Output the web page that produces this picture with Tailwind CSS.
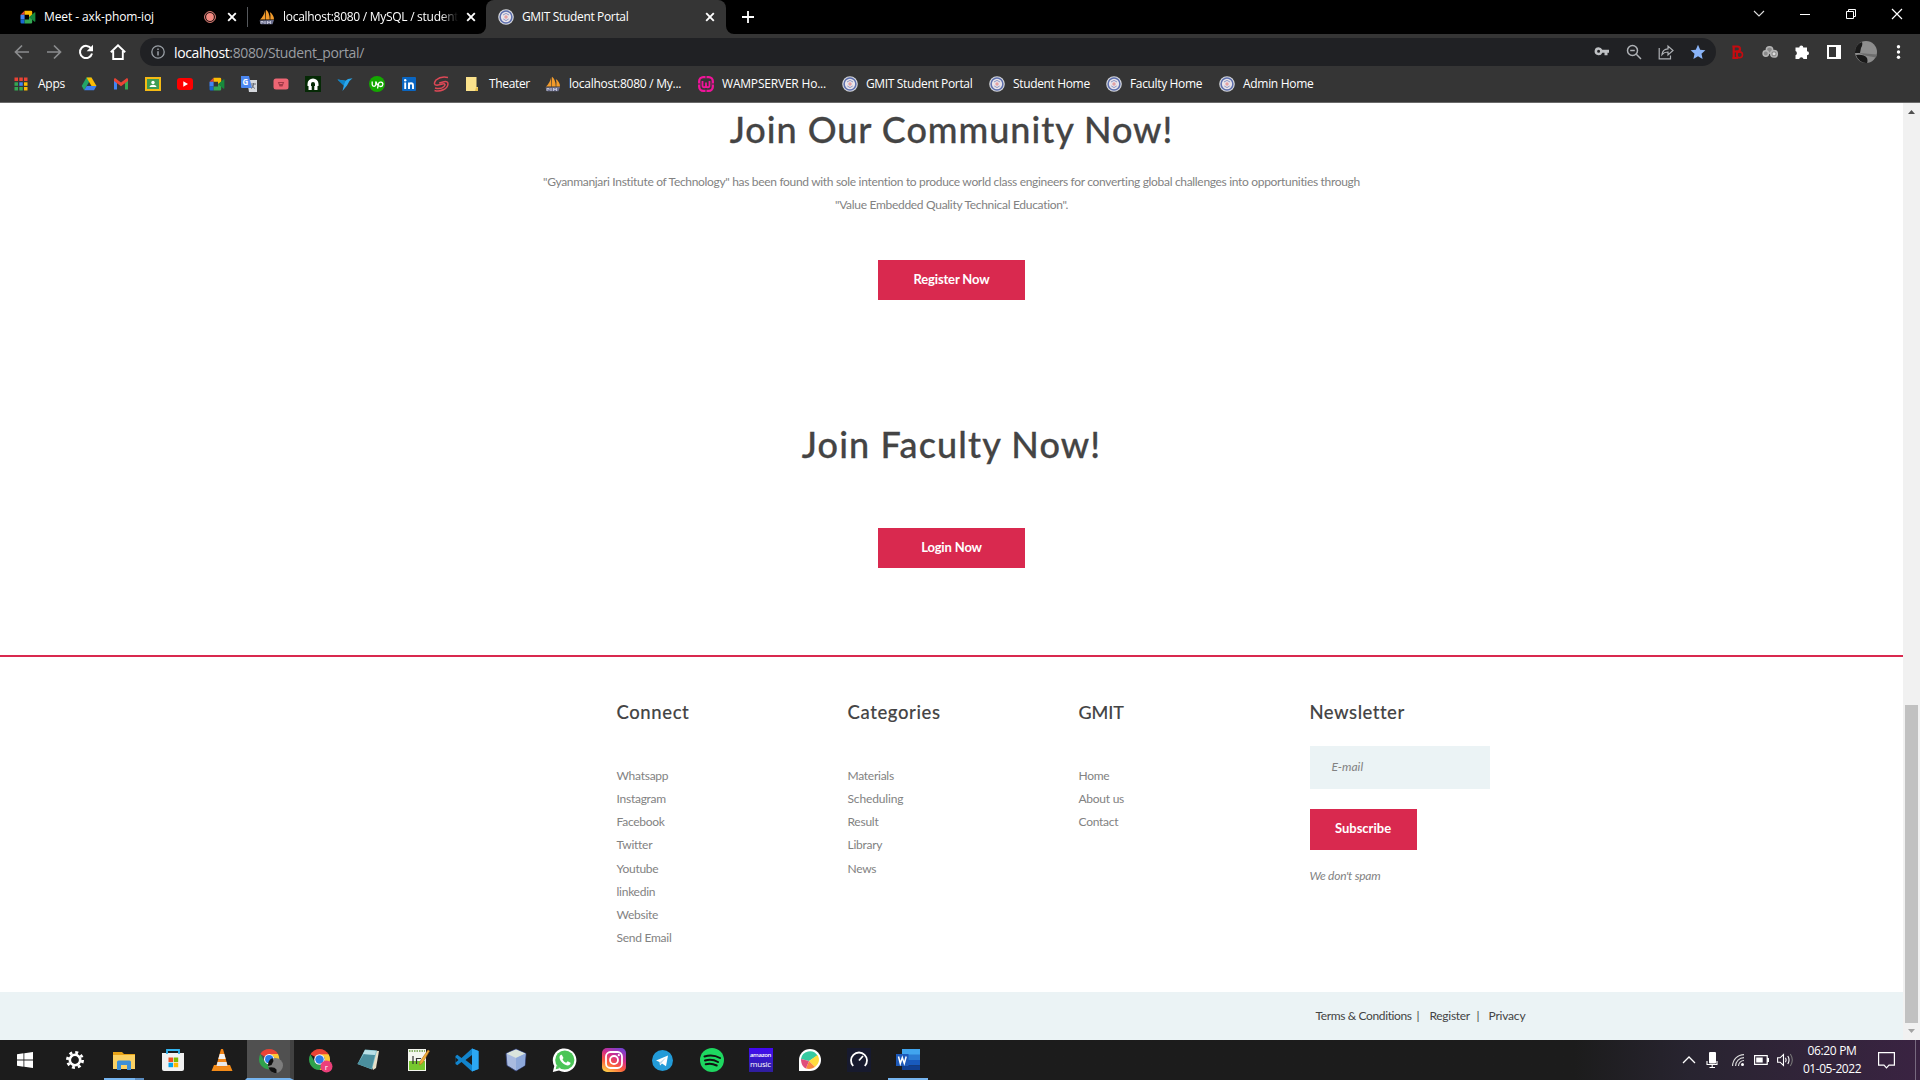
<!DOCTYPE html>
<html lang="en">
<head>
<meta charset="utf-8">
<title>GMIT Student Portal</title>
<script src="https://cdn.jsdelivr.net/npm/@tailwindcss/browser@4"></script>
</head>
<body class="w-[1920px] h-[1080px] overflow-hidden flex flex-col bg-white font-['Open_Sans',sans-serif]">

<svg class="hidden">
  <defs>
    <symbol id="crest" viewBox="0 0 16 16"><circle cx="8" cy="8" r="7.8" fill="#d5d7dc"/><circle cx="8" cy="8" r="5.900" fill="#e9e4ea" stroke="#5d6fae" stroke-width="1.500"/><path d="M5 6l3-1.600L11 6M5.300 10L8 11.600 10.700 10" stroke="#8d97c4" fill="none"/><circle cx="8" cy="8" r="1.700" fill="#e2a1a4"/></symbol>
    <symbol id="meet" viewBox="0 0 16 16"><path d="M.5 5.800L4.600 1.800v4z" fill="#ea4335"/><path d="M4.600 1.800H11a1.200 1.200 0 011.200 1.200v3.200L9 8.800v-3H4.600z" fill="#fbbc04"/><path d="M.5 5.800h4.100v4.700H.5z" fill="#4285f4"/><path d="M.5 10.500h4.100v3.900H1.700a1.200 1.200 0 01-1.200-1.200z" fill="#1967d2"/><path d="M4.600 10.500H9V7.800l3.200 2.500v2.900a1.200 1.200 0 01-1.200 1.200H4.600z" fill="#34a853"/><path d="M9 8l5.500-4.600c.4-.3.900 0 .9.400v8.500c0 .4-.5.700-.9.400z" fill="#17893c"/></symbol>
    <symbol id="pma" viewBox="0 0 16 16"><path d="M1 10.500Q5 7 6.200 1L6.500 10.500zM7 10.500V.8Q10.500 3 10.800 10.500zM11.300 10.500Q12 6 10.800 3 15 6 15 10.500z" fill="#f29b2c"/><path d="M.5 11.500l14.500-.6-1.500 4.400H2z" fill="#6c7090"/><path d="M2 15v-2.500h2V14M6 15v-3m2.500 3v-3l1.500 2 1.500-2v3" stroke="#c9cbdc" fill="none" stroke-width=".9"/></symbol>
    <symbol id="x" viewBox="0 0 10 10"><path d="M1.200 1.200l7.600 7.600M8.800 1.200L1.200 8.800" stroke="#fff" stroke-width="1.900"/></symbol>
    <symbol id="chrome" viewBox="0 0 24 24"><path d="M12 12L2.500 6.500A11 11 0 0121.500 6.500z" fill="#ea4335"/><path d="M2.500 6.500A11 11 0 0012 23l4.800-8.200A5.500 5.500 0 017.200 14.800z" fill="#2fa24c"/><path d="M21.500 6.500A11 11 0 0112 23l4.800-8.200A5.500 5.500 0 0012 6.500z" fill="#fcc934"/><circle cx="12" cy="12" r="5.500" fill="#fff"/><circle cx="12" cy="12" r="4.400" fill="#2b7de9"/></symbol>
  </defs>
</svg>

<!-- Tab strip -->
<div class="h-[34px] shrink-0 bg-black flex text-[12px] text-white whitespace-nowrap">
  <div class="w-[247px] flex items-center pl-5">
    <svg class="size-4"><use href="#meet"/></svg>
    <span class="ml-2 w-[160px] tracking-[-0.1px]">Meet - axk-phom-ioj</span>
    <svg class="size-3" viewBox="0 0 12 12"><circle cx="6" cy="6" r="5.400" fill="none" stroke="#f28b82"/><circle cx="6" cy="6" r="3.900" fill="#f28b82"/></svg>
    <svg class="size-[10px] ml-[11px]"><use href="#x"/></svg>
  </div>
  <div class="w-[239px] flex items-center relative">
    <i class="w-px h-5 bg-[#55585c]"></i>
    <svg class="size-4 ml-[11px]"><use href="#pma"/></svg>
    <span class="ml-2 w-[175px] mask-r-from-90% tracking-[-0.28px]">localhost:8080 / MySQL / student</span>
    <svg class="size-[10px] ml-[8px]"><use href="#x"/></svg>
    <svg class="absolute right-0 bottom-0 size-2" viewBox="0 0 8 8"><path d="M8 0v8H0a8 8 0 008-8z" fill="#353535"/></svg>
  </div>
  <div class="w-[240px] flex items-center bg-[#353535] rounded-t-lg pl-3">
    <svg class="size-4"><use href="#crest"/></svg>
    <span class="ml-2 w-[183px] tracking-[-0.35px]">GMIT Student Portal</span>
    <svg class="size-[10px]"><use href="#x"/></svg>
  </div>
  <svg class="size-2 self-end" viewBox="0 0 8 8"><path d="M0 0v8h8a8 8 0 01-8-8z" fill="#353535"/></svg>
  <svg class="size-3 ml-2 self-center" viewBox="0 0 12 12"><path d="M6 0v12M0 6h12" stroke="#fff" stroke-width="1.800"/></svg>
  <div class="ml-auto flex h-[28px] items-center text-white">
    <svg class="w-[46px] h-3" viewBox="-23 -6 46 12"><path d="M-5-3L0 2 5-3" stroke="#ddd" fill="none" stroke-width="1.100"/></svg>
    <svg class="w-[46px] h-3" viewBox="-23 -6 46 12"><path d="M-5 .5H5" stroke="#fff"/></svg>
    <svg class="w-[46px] h-3" viewBox="-23 -6 46 12"><path d="M-4.500-2.500h7v7h-7zM-2.500-2.500v-2h7v7h-2" stroke="#fff" fill="none"/></svg>
    <svg class="w-[46px] h-3" viewBox="-23 -6 46 12"><path d="M-5-5L5 5M5-5L-5 5" stroke="#fff" stroke-width="1.200"/></svg>
  </div>
</div>

<!-- Toolbar -->
<div class="h-[36px] shrink-0 bg-[#353535] flex items-center pl-[14px] pb-1 pt-1">
  <svg class="size-4" viewBox="0 0 16 16"><path d="M15 8H2M8 1.500L1.500 8 8 14.500" stroke="#8b8c8e" fill="none" stroke-width="1.700"/></svg>
  <svg class="size-4 ml-4" viewBox="0 0 16 16"><path d="M1 8h13M8 1.500L14.500 8 8 14.500" stroke="#8b8c8e" fill="none" stroke-width="1.700"/></svg>
  <svg class="size-4 ml-4" viewBox="0 0 16 16"><path d="M13.300 4.800A6.100 6.100 0 1014 9.500" stroke="#fff" fill="none" stroke-width="2"/><path d="M15 .8v6.400H8.700z" fill="#fff"/></svg>
  <svg class="size-4 ml-4" viewBox="0 0 16 16"><path d="M.8 8.200L8 1.300l7.200 6.900M3.200 7v8h9.600V7" stroke="#fff" fill="none" stroke-width="1.900"/></svg>
  <div class="ml-[14px] w-[1576px] h-7 rounded-full bg-[#202124] flex items-center pl-[11px] text-[14px] text-[#9a9da1]">
    <svg class="size-[14px]" viewBox="0 0 14 14"><circle cx="7" cy="7" r="6.200" fill="none" stroke="#9aa0a6" stroke-width="1.300"/><path d="M7 6.200v4.300M7 3.400v1.500" stroke="#9aa0a6" stroke-width="1.500"/></svg>
    <span class="ml-[9px] tracking-[-0.37px]"><b class="font-normal text-white">localhost</b>:8080/Student_portal/</span>
    <div class="ml-auto mr-[10px] flex gap-4 items-center">
      <svg class="size-4" viewBox="0 0 16 16"><path fill-rule="evenodd" d="M4.600 3.200a4 4 0 013.700 2.500H15v3h-1.500v2.600h-3V8.700H8.300A4 4 0 114.600 3.200zm0 2.500a1.500 1.500 0 100 3 1.500 1.500 0 000-3z" fill="#bfc1c4"/></svg>
      <svg class="size-4" viewBox="0 0 16 16"><circle cx="6.500" cy="6.500" r="5" fill="none" stroke="#aeb1b5" stroke-width="1.500"/><path d="M10.300 10.300L15 15M4.200 6.500h4.600" stroke="#aeb1b5" stroke-width="1.500"/></svg>
      <svg class="size-4" viewBox="0 0 16 16"><path d="M1.200 4v10.800h11.300V11.500M4 10.500c.5-4 3-5.500 6-5.600V2l5 4.500-5 4.500V8c-2.500 0-4.500.7-6 2.500z" fill="none" stroke="#aeb1b5" stroke-width="1.200"/></svg>
      <svg class="size-4" viewBox="0 0 16 16"><path d="M8 .8l2.200 4.900 5.200.5-3.900 3.500 1.100 5.200L8 12.200l-4.600 2.700 1.100-5.200L.6 6.200l5.200-.5z" fill="#8ab4f8"/></svg>
    </div>
  </div>
  <svg class="size-4 ml-[14px]" viewBox="0 0 16 16"><path d="M3.700 14V2.500h3.800a2.300 2.300 0 010 5H4M2.300 2.500h3M2.300 14h6" fill="none" stroke="#c40b10" stroke-width="2.200"/><circle cx="9.600" cy="10.800" r="2.900" fill="none" stroke="#c40b10" stroke-width="1.600"/><path d="M7 6.500v6" stroke="#c40b10" stroke-width="1.600"/></svg>
  <svg class="size-4 ml-4" viewBox="0 0 16 16"><g fill="#8a8a8a" stroke="#b5b5b5" stroke-width="1.500"><circle cx="7.500" cy="6" r="3.200"/><circle cx="3.800" cy="9.500" r="2.700"/><circle cx="12" cy="9.800" r="3.300"/></g><circle cx="12" cy="9.800" r="1.500" fill="#ddd"/></svg>
  <svg class="size-4 ml-4" viewBox="0 0 16 16"><path d="M1.500 3.500h3.800a2 2 0 114 0H13v3.700a2 2 0 110 4V15H9.500a2.200 2.200 0 00-4.300 0H1.500v-3.800a2.200 2.200 0 000-4.100z" fill="#fff"/></svg>
  <svg class="size-4 ml-4" viewBox="0 0 16 16"><path fill-rule="evenodd" d="M1 1h14v14H1zm2 2v10h7V3z" fill="#fff"/></svg>
  <svg class="size-[22px] ml-[13px]" viewBox="0 0 22 22"><circle cx="11" cy="11" r="11" fill="#8d8d8d"/><path d="M0 11A11 11 0 017 1q1 3-1 6l-1 5H0zM1 14q8-1 11 3 1 3 0 5A11 11 0 011 14z" fill="#191919"/><path d="M4 12l18 1.500-1 3-11-2z" fill="#6e6e6e"/></svg>
  <svg class="size-4 ml-[14px]" viewBox="0 0 16 16"><g fill="#fff"><circle cx="7.500" cy="2.800" r="1.700"/><circle cx="7.500" cy="8" r="1.700"/><circle cx="7.500" cy="13.200" r="1.700"/></g></svg>
</div>

<!-- Bookmarks bar -->
<div class="h-[33px] shrink-0 bg-[#353535] border-b border-[#6a6a6a] flex items-center pl-[14px] pb-[4px] text-[12px] tracking-[-0.25px] text-white whitespace-nowrap">
  <svg class="size-[14px]" viewBox="0 0 14 14"><path d="M.5.500h3.500v3.500H.5zM5.300.500h3.500v3.500H5.300zM10 .5h3.500v3.500H10z" fill="#ea4335"/><path d="M.5 5.300h3.500v3.500H.5z" fill="#34a853"/><path d="M5.300 5.300h3.500v3.500H5.300z" fill="#4285f4"/><path d="M10 5.300h3.500v3.500H10z" fill="#fbbc04"/><path d="M.5 10h3.500v3.500H.5zM5.300 10h3.500v3.500H5.300z" fill="#34a853"/><path d="M10 10h3.500v3.500H10z" fill="#fbbc04"/></svg>
  <span class="ml-[10px] w-[43px]">Apps</span>
  <div class="flex gap-4 w-[384px]">
    <svg class="size-4" viewBox="0 0 16 16"><path d="M5.500 1.500h5L8 6 3.200 14.300.7 10z" fill="#23a566"/><path d="M5.500 1.500h5l5 8.500h-5z" fill="#fbbc04"/><path d="M5.700 10h9.800L13 14.300H3.200z" fill="#3d7ff0"/></svg>
    <svg class="size-4" viewBox="0 0 16 16"><path d="M1 3.500v10h3V7z" fill="#4285f4"/><path d="M12 7v6.500h3v-10z" fill="#34a853"/><path d="M1 5V3.500C1 2.500 2 2 3 2.700L8 6.500l5-3.800c1-.7 2-.2 2 .8V5l-7 5.300z" fill="#ea4335"/></svg>
    <svg class="size-4" viewBox="0 0 16 16"><path d="M0 1h16v14H0z" fill="#f5ba14"/><path d="M2 3h12v10H2z" fill="#3f9c54"/><circle cx="8" cy="6.500" r="1.700" fill="#fff"/><path d="M4.500 11c.5-3 6.500-3 7 0z" fill="#fff"/></svg>
    <svg class="size-4" viewBox="0 0 16 16"><rect y="2" width="16" height="12" rx="3" fill="#f00"/><path d="M6.300 5.300L11 8l-4.700 2.700z" fill="#fff"/></svg>
    <svg class="size-4"><use href="#meet"/></svg>
    <svg class="size-4" viewBox="0 0 16 16"><path d="M6 4h10v12H8z" fill="#d4d7dc"/><path d="M0 0h8l3 12H1a1 1 0 01-1-1z" fill="#4c87f0"/><text x="1.500" y="8.500" font-size="8" font-weight="700" fill="#fff">G</text><path d="M10 8h5M12.500 7v1c0 3-1.500 4-2.500 4.500M11 9c.5 2 2 3 3 3.500" stroke="#666b75" fill="none"/></svg>
    <svg class="size-4" viewBox="0 0 16 16"><rect x=".5" y="2.500" width="15" height="11" rx="2.500" fill="#ee6674"/><path d="M4.800 6h6.400l-1.700 4.500h-3z" fill="#a33a48"/><path d="M6.500 7.500h3" stroke="#ee6674"/></svg>
    <svg class="size-4" viewBox="0 0 16 16"><path d="M0 0h16v16H0z" fill="#052905"/><path d="M2.500 8a5.500 5.500 0 0111 0v2h-1v4H9.300v-4H10V8a2 2 0 00-4 0v2h.7v4H3.500v-4h-1z" fill="#fff"/></svg>
    <svg class="size-4" viewBox="0 0 16 16"><path d="M.5 3.500l8 1.200L11 3l4.500-.7-3 2.700L10 9.500 5.500 15 6.800 9.500z" fill="#29a7ed"/><path d="M.5 3.500l8 1.200L6.800 9.500z" fill="#0d84c9"/></svg>
    <svg class="size-4" viewBox="0 0 16 16"><circle cx="8" cy="8" r="8" fill="#14a800"/><path d="M3.200 5.500v3a1.800 1.800 0 003.600 0v-3c1 2.500 1.700 3.500 2.400 4M8.500 12.500L9.500 8a2.200 2.200 0 112 2.500c-1.500 0-2.500-1-3.500-2.500" fill="none" stroke="#fff" stroke-width="1.300"/></svg>
    <svg class="size-4" viewBox="0 0 16 16"><rect x="1" y="1" width="14" height="14" rx="1" fill="#0a66c2"/><path d="M4.200 6.500V13M8 13V6.500M8 9.500c0-3 4-3 4 0V13" stroke="#fff" stroke-width="1.900" fill="none"/><circle cx="4.200" cy="4.200" r="1.200" fill="#fff"/></svg>
    <svg class="size-4" viewBox="0 0 16 16"><path d="M15 1.500Q8-.2 3 4-.5 9 4 9.200L9.500 8c3-.6 3 1 1.500 2.500-2 2-5.500 2.500-9 1.500M1.500 14.500c6 1.800 13-1.500 13.500-6.500 0-2-1.500-2.800-4-2.200L6.200 7" fill="none" stroke="#dd4856" stroke-width="1.500"/></svg>
  </div>
  <svg class="size-4 ml-[-1px]" viewBox="0 0 16 16"><path d="M2 1h10.500v10H14v4H2z" fill="#fbe28c"/><path d="M12 11.500h2V15h-3z" fill="#e9c04c"/></svg>
  <span class="ml-[9px] w-[56px] tracking-[-0.35px]">Theater</span>
  <svg class="size-4"><use href="#pma"/></svg>
  <span class="ml-2 w-[129px]">localhost:8080 / My...</span>
  <svg class="size-4" viewBox="0 0 16 16"><rect x="1.200" y="1.200" width="13.600" height="13.600" rx="4" fill="none" stroke="#f0149a" stroke-width="2.300"/><path d="M4.500 5v4.500a1.700 1.700 0 003.500 0V6.500v3a1.700 1.700 0 003.500 0V5" fill="none" stroke="#f0149a" stroke-width="1.800"/><path d="M8 0v2.500M8 13v3M0 8h2M14 8h2" stroke="#353535"/></svg>
  <span class="ml-2 w-[120px] tracking-[-0.2px]">WAMPSERVER Ho...</span>
  <svg class="size-4"><use href="#crest"/></svg>
  <span class="ml-2 w-[123px] tracking-[-0.35px]">GMIT Student Portal</span>
  <svg class="size-4"><use href="#crest"/></svg>
  <span class="ml-2 w-[93px] tracking-[-0.35px]">Student Home</span>
  <svg class="size-4"><use href="#crest"/></svg>
  <span class="ml-2 w-[89px] tracking-[-0.35px]">Faculty Home</span>
  <svg class="size-4"><use href="#crest"/></svg>
  <span class="ml-2 tracking-[-0.3px]">Admin Home</span>
</div>

<!-- Page and scrollbar -->
<div class="h-[937px] shrink-0 flex">
  <main class="w-[1903px] flex flex-col font-[Lato,sans-serif] text-[12px] text-[#828282] whitespace-nowrap">
    <section class="h-[552px] flex flex-col items-center text-center">
      <h1 class="mt-[5px] h-[44px] leading-[43px] text-[36px] font-medium text-[#444] tracking-[0.96px] [-webkit-text-stroke:0.3px_#444]">Join Our Community Now!</h1>
      <p class="mt-[18px] leading-[23px]"><span class="tracking-[-0.32px]">"Gyanmanjari Institute of Technology" has been found with sole intention to produce world class engineers for converting global challenges into opportunities through</span><br><span class="tracking-[-0.3px]">"Value Embedded Quality Technical Education".</span></p>
      <a class="mt-[44px] w-[147px] h-10 leading-[39px] bg-[#d9294f] text-white font-bold text-[13px] tracking-[-0.15px]">Register Now</a>
      <h1 class="mt-[122px] h-[44px] leading-[44px] text-[36px] font-medium text-[#444] tracking-[1.13px] [-webkit-text-stroke:0.3px_#444]">Join Faculty Now!</h1>
      <a class="mt-[62px] w-[147px] h-10 leading-[39px] bg-[#d9294f] text-white font-bold text-[13px] tracking-[-0.15px]">Login Now</a>
    </section>
    <footer class="border-t-2 border-[#d9294f] flex flex-col h-[385px]">
      <div class="h-[335px] pl-[616.500px] pt-[42px] flex leading-[23.15px] tracking-[-0.26px]">
        <div class="w-[231px]"><h2 class="text-[18.5px] tracking-[0.6px] leading-[26px] mb-[39px] font-medium text-[#444] [-webkit-text-stroke:0.1px_#444]">Connect</h2><p>Whatsapp</p><p>Instagram</p><p>Facebook</p><p>Twitter</p><p>Youtube</p><p>linkedin</p><p>Website</p><p>Send Email</p></div>
        <div class="w-[231px]"><h2 class="text-[18.5px] tracking-[0.6px] leading-[26px] mb-[39px] font-medium text-[#444] [-webkit-text-stroke:0.1px_#444]">Categories</h2><p>Materials</p><p class="tracking-[-0.15px]">Scheduling</p><p>Result</p><p>Library</p><p>News</p></div>
        <div class="w-[231px]"><h2 class="text-[18px] tracking-[-0.1px] leading-[26px] mb-[39px] font-medium text-[#444] [-webkit-text-stroke:0.1px_#444]">GMIT</h2><p>Home</p><p>About us</p><p>Contact</p></div>
        <div class="w-[180px]"><h2 class="text-[18.5px] tracking-[0.5px] leading-[26px] font-medium text-[#444] [-webkit-text-stroke:0.1px_#444]">Newsletter</h2>
          <div class="mt-[21px] h-[43px] leading-[42px] pl-[22px] bg-[#ebf3f5] italic tracking-normal">E-mail</div>
          <div class="mt-5 w-[107px] h-[41px] leading-[39px] text-center bg-[#d9294f] text-white font-bold text-[13px] tracking-normal">Subscribe</div>
          <p class="mt-[14px] italic">We don't spam</p>
        </div>
      </div>
      <div class="h-[48px] bg-[#ebf3f5] flex items-center pl-[1315.500px] text-[#444]"><span class="w-[101px] tracking-[-0.38px]">Terms &amp; Conditions</span><span class="w-[13px]">|</span><span class="w-[47px] tracking-[-0.3px]">Register</span><span class="w-[12px]">|</span><span class="tracking-[-0.2px]">Privacy</span></div>
    </footer>
  </main>
  <div class="w-[17px] bg-[#f1f1f1] flex flex-col items-center">
    <svg class="w-[17px] h-[17px]" viewBox="0 0 17 17"><path d="M5 11h7L8.500 7z" fill="#505050"/></svg>
    <div class="mt-[585px] w-[13px] h-[318px] bg-[#c1c1c1]"></div>
    <svg class="w-[17px] h-[17px]" viewBox="0 0 17 17"><path d="M5 6h7L8.500 10z" fill="#a3a3a3"/></svg>
  </div>
</div>

<!-- Taskbar -->
<div class="h-10 shrink-0 flex items-stretch bg-linear-to-r from-[#1c1c1c] from-82% via-[#282430] via-88% to-[#3a2342]">
  <div class="flex [&>div]:w-[49px] [&>div]:flex [&>div]:items-center [&>div]:justify-center">
    <div><svg class="size-4" viewBox="0 0 16 16"><path d="M0 2.300L6.500 1.300v6.200H0zM7.300 1.200L16 0v7.500H7.300zM0 8.400h6.500v6.300L0 13.700zM7.300 8.400H16V16l-8.700-1.200z" fill="#fff"/></svg></div>
    <div class="pl-[3px]"><svg class="size-[20px]" viewBox="-10 -10 20 20"><circle r="5.200" fill="none" stroke="#fff" stroke-width="2.600"/><circle r="7.600" fill="none" stroke="#fff" stroke-width="2.800" stroke-dasharray="2.980 2.990"/></svg></div>
    <div class="pl-[2px] pt-[2px] relative"><svg class="w-[22px] h-[20px]" viewBox="0 0 22 20"><path d="M0 1h9l2 2h11v15H0z" fill="#e8a317"/><path d="M0 4h22v14H0z" fill="#fbd163"/><path d="M4 19v-8a1.500 1.500 0 011.500-1.500h11A1.500 1.500 0 0118 11v8h-4v-5H8v5z" fill="#3b8fd8"/></svg><i class="absolute bottom-0 left-[6px] w-10 h-[2px] bg-[#76b5f0] border-r-[9px] border-[#5a8cc0]"></i></div>
    <div class="pl-[2px]"><svg class="w-[24px] h-[24px]" viewBox="0 0 24 24"><path d="M1 5h22v16a2 2 0 01-2 2H3a2 2 0 01-2-2z" fill="#f1f1f1"/><path d="M6 6V2h12v4" fill="none" stroke="#33b5f0" stroke-width="1.800"/><path d="M7.500 9.500H12V14H7.500z" fill="#f25022"/><path d="M12.700 9.500h4.500V14h-4.500z" fill="#7fba00"/><path d="M7.500 14.700H12v4.500H7.500z" fill="#00a4ef"/><path d="M12.700 14.700h4.500v4.500h-4.500z" fill="#ffb900"/></svg></div>
    <div class="pl-[2px]"><svg class="w-[22px] h-[24px]" viewBox="0 0 22 24"><path d="M3 17h16l2.500 6h-21z" fill="#f48b18"/><path d="M10 1h2l5 18H5z" fill="#f28416"/><path d="M8.700 6h4.600l1.400 5H7.300z" fill="#f3f3f3"/><path d="M6.500 14h9l1 4h-11z" fill="#e9e9e9"/></svg></div>
    <div class="bg-[#505050] bg-clip-padding border-b-2 border-[#76b5f0] border-l-2 border-l-[#1c1c1c] border-r-4 border-r-[#414141] pt-[3px] pl-1"><svg class="size-[25px]" viewBox="0 0 25 25"><g transform="scale(.93)"><use href="#chrome" width="24" height="24"/></g><circle cx="17.500" cy="17.500" r="7.500" fill="#7d7d7d"/><path d="M10.500 14a7.500 7.500 0 014-4l1 3-2 4-3.500 1zM10.500 19.500q6-1 8 2v3.500a7.500 7.500 0 01-8-5.500z" fill="#111"/></svg></div>
    <div class="pl-[3px]"><svg class="size-[25px]" viewBox="0 0 25 25"><g transform="scale(.96)"><use href="#chrome" width="24" height="24"/></g><circle cx="18.500" cy="18.500" r="6" fill="#ec407a"/><text x="16.800" y="21.500" font-size="8" fill="#fff">r</text></svg></div>
    <div class="pl-[3px]"><svg class="w-[24px] h-[22px]" viewBox="0 0 24 22"><path d="M9 1l13 1-3 17-3 2z" fill="#e6dfc8"/><path d="M8 .5l12 1-5 19L.5 15z" fill="#7dc0cc"/><path d="M7 5l11 1-3.500 14L.5 15z" fill="#4b8f9e"/><path d="M8 1l11 1-1 4L6 5z" fill="#b9e0e6"/></svg></div>
    <div class="pl-[2px]"><svg class="w-[24px] h-[24px]" viewBox="0 0 24 24"><path d="M2 1h18v22H2z" fill="#f4f6ef"/><path d="M3 13h16v9H3z" fill="#76c82e"/><path d="M3 3h16" stroke="#8bb36b" stroke-dasharray="1.500 1" stroke-width="2"/><path d="M7 8v8M10.500 10v6M10 10.500h5" stroke="#333" stroke-width="1.200" fill="none"/><path d="M22 2l1.500 1-7 12-3 2 .5-3.500z" fill="#efb03c" stroke="#b3691b" stroke-width=".6"/></svg></div>
    <div class="pl-[2px]"><svg class="size-[24px]" viewBox="0 0 24 24"><path d="M17 .5L23.500 3v18L17 23.500 6.500 14 2.300 17.200.5 16V8l1.800-1.200L6.500 10z" fill="#1284cc"/><path d="M17 .5L23.500 3v18L17 23.500z" fill="#2ca7f2"/><path d="M17 7v10l-6.500-5zM.5 9.500v5L3.500 12z" fill="#1c1c1c"/></svg></div>
    <div class="pl-[2px]"><svg class="w-[22px] h-[24px]" viewBox="0 0 22 24"><path d="M11 1l10 4.500-1 12L11 23 2 17.500 1 5.500z" fill="#a9bbe0" stroke="#33427c" stroke-width=".8"/><path d="M11 1.500l9.500 4L11 10 1.500 5.500z" fill="#dbe5dd"/><path d="M11 10v12.500l8.700-5 .8-12z" fill="#8ea9da"/></svg></div>
    <div class="pl-[2px]"><svg class="size-[25px]" viewBox="0 0 25 25"><path d="M.8 24l1.500-6A11.800 11.800 0 117 22.600z" fill="#fff"/><circle cx="12.800" cy="12" r="9.600" fill="#4bc557"/><path d="M3.700 21.200l1-4 3 3z" fill="#4bc557"/><path d="M9.800 6.800c-1-.4-2.400 1-2.300 2.600.3 4 5 8 8.500 8 1.500 0 3-1.500 2.500-2.600l-2.800-1.500-1.500 1.500c-1.500-.4-3.200-2-3.700-3.500l1-1.400z" fill="#fff"/></svg></div>
    <div class="pl-[2px]"><svg class="size-[24px]" viewBox="0 0 24 24"><defs><linearGradient id="ig" x1=".2" y1="1" x2=".7" y2="0"><stop offset="0" stop-color="#ffce47"/><stop offset=".35" stop-color="#fb5a3d"/><stop offset=".65" stop-color="#d32d8b"/><stop offset="1" stop-color="#7a40cf"/></linearGradient></defs><rect width="24" height="24" rx="5" fill="url(#ig)"/><rect x="4" y="4" width="16" height="16" rx="4.500" fill="none" stroke="#fff" stroke-width="1.800"/><circle cx="12" cy="12" r="4" fill="none" stroke="#fff" stroke-width="1.800"/><circle cx="16.800" cy="7.200" r="1.100" fill="#fff"/></svg></div>
    <div class="pl-[2px]"><svg class="size-[21px]" viewBox="0 0 21 21"><circle cx="10.500" cy="10.500" r="10.500" fill="#229bd8"/><path d="M4 10.500L16 5.500l-2 10.700-4-2.800-2 2-.5-3.500z" fill="#fff"/><path d="M8 12l6-4.500-4 5-1.700 2z" fill="#b9d8ea"/></svg></div>
    <div class="pl-[2px]"><svg class="size-[24px]" viewBox="0 0 24 24"><circle cx="12" cy="12" r="12" fill="#1ed760"/><path d="M4.500 8.500c5-1.500 11-1 15.500 1.500M5 12.500c4.500-1.300 9-.8 13 1.500M5.700 16.200c4-1 7.500-.5 11 1.300" fill="none" stroke="#111" stroke-width="2" stroke-linecap="round"/></svg></div>
    <div class="pl-[2px]"><div class="w-6 h-6 bg-linear-to-b from-[#4306f5] to-[#2f1e9c] text-white text-center"><div class="text-[6px] font-semibold mt-[4px] -tracking-[.3px] leading-[7px]">amazon</div><div class="text-[8px] leading-[9px] -tracking-[.2px]">music</div></div></div>
    <div class="pl-[2px]"><svg class="size-[22px]" viewBox="0 0 22 22"><path d="M0 22V11a11 11 0 1111 11z" fill="#fff"/><path d="M2 10a9 9 0 0116.500-3.500L10 12z" fill="#36c9a0"/><path d="M18.500 6c3 5 1 9-2.500 12l-6-6z" fill="#ffdc3d"/><path d="M10 12l6 6c-3 2-6 2.500-9 1.500z" fill="#f8893d"/><path d="M2 10q4 1 8 2l-3 7.500c-3-1-5-4.500-5-9.500z" fill="#e04d7b"/></svg></div>
    <div class="pl-[2px]"><svg class="size-[24px]" viewBox="0 0 24 24"><path d="M0 0h24v24H0z" fill="#171a2e"/><path d="M6.200 18a8 8 0 1111.600 0M12 12.500l4-4.500" fill="none" stroke="#fff" stroke-width="1.800"/></svg></div>
    <div class="pl-[3px] relative"><svg class="size-[24px]" viewBox="0 0 24 24"><path d="M6 1h18v6H6z" fill="#41a5ee"/><path d="M6 6.500h18V12H6z" fill="#2b7cd3"/><path d="M6 12h18v5.500H6z" fill="#185abd"/><path d="M6 17.500h18V22H6z" fill="#103f91"/><path d="M0 6h12.500v12H0z" fill="#1d59b8"/><path d="M2.500 8.500L4.300 15.500l2-6 2 6L10.200 8.500" stroke="#fff" fill="none" stroke-width="1.500"/></svg><i class="absolute bottom-0 left-[6px] w-10 h-[2px] bg-[#76b5f0]"></i></div>
  </div>
  <div class="ml-auto w-[240px] flex items-center text-white">
    <svg class="w-[18px] h-3" viewBox="0 0 18 12"><path d="M3 9l6-6 6 6" fill="none" stroke="#fff" stroke-width="1.300"/></svg>
    <svg class="w-3 h-4 ml-[8px]" viewBox="0 0 12 16"><rect x="3" width="7" height="11.500" rx="1" fill="#fff"/><path d="M1 9v3.500h10V9M6.200 13v2.500M3.500 15.500h5.500" stroke="#fff" fill="none" stroke-width="1.100"/></svg>
    <svg class="w-3 h-3 ml-[14px]" viewBox="0 0 12 12"><g fill="none" stroke="#ddd" stroke-width="1.100"><path d="M.6 12A11.400 11.400 0 0112 .6M3.600 12A8.400 8.400 0 0112 3.600M6.500 12A5.500 5.500 0 0112 6.500"/></g><circle cx="10.500" cy="10.500" r="1.500" fill="#fff"/></svg>
    <svg class="w-[15px] h-[10px] ml-[10px]" viewBox="0 0 15 10"><path d="M.6.600h12.600v8.800H.6z" fill="none" stroke="#fff" stroke-width="1.200"/><path d="M2.200 2.500h6.500v5H2.200zM13 3h2v4h-2z" fill="#fff"/></svg>
    <svg class="w-[17px] h-[14px] ml-[8px]" viewBox="0 0 17 14"><path d="M.6 4.800h2.500L6.500 1.500v11L3.100 9.200H.6z" fill="none" stroke="#fff" stroke-width="1.100"/><path d="M8.500 4.800q1.300 2.200 0 4.400M10.800 3q2.500 4 0 8" fill="none" stroke="#fff" stroke-width="1.100"/><path d="M13.300 1q4 6 0 12" fill="none" stroke="#777" stroke-width="1.100"/></svg>
    <div class="w-[76px] text-[12px] leading-[18px] tracking-[-0.35px] text-center whitespace-nowrap">06:20 PM<br><span class="tracking-[-0.45px]">01-05-2022</span></div>
    <svg class="w-[17px] h-[17px] ml-[8px]" viewBox="0 0 17 17"><path d="M.6.600h15.800v12.600H11L8.500 15.800 6 13.200H.6z" fill="none" stroke="#fff" stroke-width="1.200"/></svg>
    <i class="ml-auto mr-[4px] w-px h-full bg-[#77697f]"></i>
  </div>
</div>
</body>
</html>
